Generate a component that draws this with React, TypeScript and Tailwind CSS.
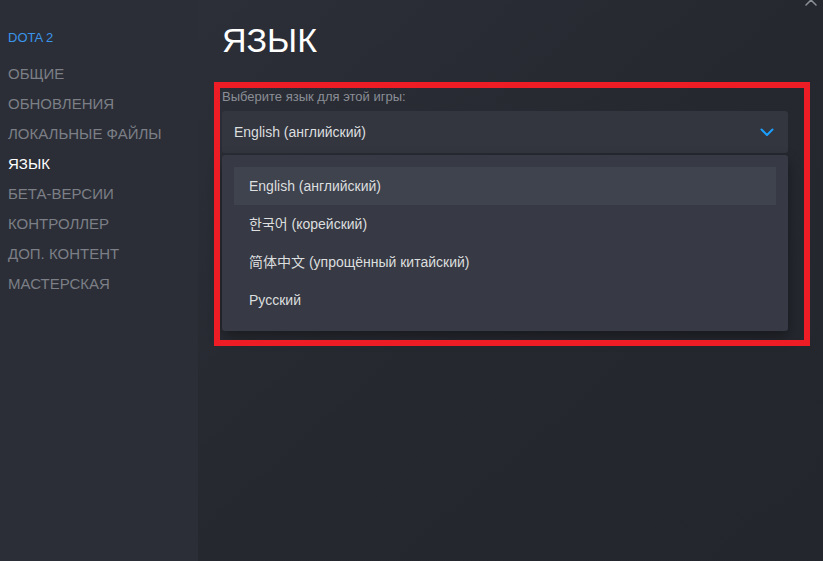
import React from "react";

const navItems = [
  { label: "ОБЩИЕ" },
  { label: "ОБНОВЛЕНИЯ" },
  { label: "ЛОКАЛЬНЫЕ ФАЙЛЫ" },
  { label: "ЯЗЫК", active: true },
  { label: "БЕТА-ВЕРСИИ" },
  { label: "КОНТРОЛЛЕР" },
  { label: "ДОП. КОНТЕНТ" },
  { label: "МАСТЕРСКАЯ" },
];

const langs = [
  "English (английский)",
  "한국어 (корейский)",
  "简体中文 (упрощённый китайский)",
  "Русский",
];

export default function App() {
  return (
    <div
      className="relative flex h-[561px] w-[823px] overflow-hidden bg-[#24272f] text-[#dcdedf]"
      style={{ fontFamily: '"Liberation Sans", Arial, "Noto Sans CJK SC", "Noto Sans CJK KR", sans-serif' }}
    >
      {/* Sidebar */}
      <aside className="flex w-[198px] shrink-0 flex-col bg-[#2b2e36] pl-2 pt-[30px]">
        <div className="h-[16px] text-[13px] leading-[16px] text-[#3a94ea]">DOTA 2</div>
        <nav className="mt-[13px] flex flex-col">
          {navItems.map((n) => (
            <div
              key={n.label}
              className={`h-[30px] text-[15px] leading-[30px] ${n.active ? "text-white" : "text-[#7c7f86]"}`}
            >
              {n.label}
            </div>
          ))}
        </nav>
      </aside>

      {/* Main */}
      <main className="relative flex-1 bg-gradient-to-br from-[#2c2f37] via-[#25282f] to-[#23262d] pl-6 pr-[35px] pt-[20px]">
        <h1 className="h-[40px] text-[34px] font-normal leading-[40px] text-white">ЯЗЫК</h1>
        <div className="mt-[29px] text-[13px] leading-[16px] text-[#8a8e96]">Выберите язык для этой игры:</div>
        <div className="mt-[6px] flex h-[42px] items-center justify-between rounded-[3px] bg-[#33363f] pl-3 pr-[14px]">
          <span className="text-[14px] text-[#dcdedf]">English (английский)</span>
          <svg width="14" height="9" viewBox="0 0 14 9" fill="none">
            <path d="M1.5 1.5 L7 7 L12.5 1.5" stroke="#1a9fff" strokeWidth="2" strokeLinecap="round" strokeLinejoin="round" />
          </svg>
        </div>
        <div className="mt-[2px] flex flex-col rounded-[3px] bg-[#373a44] p-3 shadow-[0_6px_14px_rgba(0,0,0,0.35)]">
          {langs.map((l, i) => (
            <div
              key={l}
              className={`flex h-[38px] items-center pl-[15px] text-[14px] text-[#dcdedf] ${i === 0 ? "bg-[#3e434e]" : ""}`}
            >
              {l}
            </div>
          ))}
        </div>

        {/* Close */}
        <svg className="absolute right-[6px] top-[-6px]" width="12" height="12" viewBox="0 0 12 12" fill="none">
          <path d="M1 1 L11 11 M11 1 L1 11" stroke="#8b9097" strokeWidth="1.5" strokeLinecap="round" />
        </svg>
      </main>

      {/* Red annotation box */}
      <div className="pointer-events-none absolute left-[214px] top-[82px] h-[264px] w-[596px] border-[6px] border-[#ee1c24]" />
    </div>
  );
}
